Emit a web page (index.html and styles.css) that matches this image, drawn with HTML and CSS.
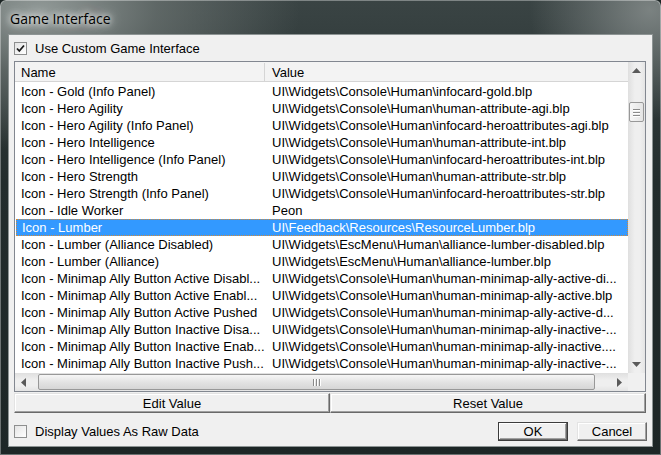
FILE: index.html
```html
<!DOCTYPE html>
<html lang="en">

<head>
    <meta charset="UTF-8">
    <title>Game Interface</title>
    <link rel="stylesheet" href="styles.css">
</head>

<body>
    <div class="window">
        <div class="titlebar">
            <span class="title">Game Interface</span>
        </div>

        <div class="client">
            <div class="check-row top-check">
                <span class="checkbox">
                    <svg width="11" height="11" viewBox="0 0 11 11">
                        <path d="M2 5.5 L4.3 8 L9 2.5" fill="none" stroke="#1a1a1a" stroke-width="1.8" />
                    </svg>
                </span>
                <span>Use Custom Game Interface</span>
            </div>

            <div class="listbox">
                <div class="list-main">
                    <div class="list-view">
                        <div class="list-header">
                            <div class="col col-name">Name</div>
                            <div class="col col-value">Value</div>
                        </div>
                        <div class="list-rows">
                            <div class="row"><div class="col col-name">Icon - Gold (Info Panel)</div><div class="col col-value">UI\Widgets\Console\Human\infocard-gold.blp</div></div>
                            <div class="row"><div class="col col-name">Icon - Hero Agility</div><div class="col col-value">UI\Widgets\Console\Human\human-attribute-agi.blp</div></div>
                            <div class="row"><div class="col col-name">Icon - Hero Agility (Info Panel)</div><div class="col col-value">UI\Widgets\Console\Human\infocard-heroattributes-agi.blp</div></div>
                            <div class="row"><div class="col col-name">Icon - Hero Intelligence</div><div class="col col-value">UI\Widgets\Console\Human\human-attribute-int.blp</div></div>
                            <div class="row"><div class="col col-name">Icon - Hero Intelligence (Info Panel)</div><div class="col col-value">UI\Widgets\Console\Human\infocard-heroattributes-int.blp</div></div>
                            <div class="row"><div class="col col-name">Icon - Hero Strength</div><div class="col col-value">UI\Widgets\Console\Human\human-attribute-str.blp</div></div>
                            <div class="row"><div class="col col-name">Icon - Hero Strength (Info Panel)</div><div class="col col-value">UI\Widgets\Console\Human\infocard-heroattributes-str.blp</div></div>
                            <div class="row"><div class="col col-name">Icon - Idle Worker</div><div class="col col-value">Peon</div></div>
                            <div class="row selected"><div class="col col-name">Icon - Lumber</div><div class="col col-value">UI\Feedback\Resources\ResourceLumber.blp</div></div>
                            <div class="row"><div class="col col-name">Icon - Lumber (Alliance Disabled)</div><div class="col col-value">UI\Widgets\EscMenu\Human\alliance-lumber-disabled.blp</div></div>
                            <div class="row"><div class="col col-name">Icon - Lumber (Alliance)</div><div class="col col-value">UI\Widgets\EscMenu\Human\alliance-lumber.blp</div></div>
                            <div class="row"><div class="col col-name">Icon - Minimap Ally Button Active Disabl...</div><div class="col col-value">UI\Widgets\Console\Human\human-minimap-ally-active-di...</div></div>
                            <div class="row"><div class="col col-name">Icon - Minimap Ally Button Active Enabl...</div><div class="col col-value">UI\Widgets\Console\Human\human-minimap-ally-active.blp</div></div>
                            <div class="row"><div class="col col-name">Icon - Minimap Ally Button Active Pushed</div><div class="col col-value">UI\Widgets\Console\Human\human-minimap-ally-active-d...</div></div>
                            <div class="row"><div class="col col-name">Icon - Minimap Ally Button Inactive Disa...</div><div class="col col-value">UI\Widgets\Console\Human\human-minimap-ally-inactive-...</div></div>
                            <div class="row"><div class="col col-name">Icon - Minimap Ally Button Inactive Enab...</div><div class="col col-value">UI\Widgets\Console\Human\human-minimap-ally-inactive....</div></div>
                            <div class="row"><div class="col col-name">Icon - Minimap Ally Button Inactive Push...</div><div class="col col-value">UI\Widgets\Console\Human\human-minimap-ally-inactive-...</div></div>
                        </div>
                    </div>

                    <div class="vscroll">
                        <div class="arrow">
                            <svg width="9" height="5" viewBox="0 0 9 5"><path d="M4.5 0 L9 5 L0 5 Z" fill="#5a5a5a" /></svg>
                        </div>
                        <div class="vtrack">
                            <div class="vthumb">
                                <span></span><span></span><span></span>
                            </div>
                        </div>
                        <div class="arrow">
                            <svg width="9" height="5" viewBox="0 0 9 5"><path d="M0 0 L9 0 L4.5 5 Z" fill="#5a5a5a" /></svg>
                        </div>
                    </div>
                </div>

                <div class="list-bottom">
                    <div class="hscroll">
                        <div class="arrow">
                            <svg width="5" height="9" viewBox="0 0 5 9"><path d="M5 0 L5 9 L0 4.5 Z" fill="#5a5a5a" /></svg>
                        </div>
                        <div class="htrack">
                            <div class="hthumb">
                                <span></span><span></span><span></span>
                            </div>
                        </div>
                        <div class="arrow">
                            <svg width="5" height="9" viewBox="0 0 5 9"><path d="M0 0 L5 4.5 L0 9 Z" fill="#5a5a5a" /></svg>
                        </div>
                    </div>
                    <div class="corner"></div>
                </div>
            </div>

            <div class="edit-buttons">
                <button class="btn">Edit Value</button>
                <button class="btn">Reset Value</button>
            </div>

            <div class="footer">
                <div class="check-row">
                    <span class="checkbox"></span>
                    <span>Display Values As Raw Data</span>
                </div>
                <div class="dialog-buttons">
                    <button class="btn btn-default">OK</button>
                    <button class="btn">Cancel</button>
                </div>
            </div>
        </div>
    </div>
</body>

</html>
```

FILE: styles.css
```css
* {
    box-sizing: border-box;
}

html,
body {
    margin: 0;
    padding: 0;
}

body {
    width: 661px;
    height: 455px;
    overflow: hidden;
    font-family: "Liberation Sans", Arial, sans-serif;
    font-size: 13px;
    color: #000;
    background: #1c2424;
}

/* glass frame */
.window {
    height: 455px;
    display: flex;
    flex-direction: column;
    border-radius: 6px 6px 0 0;
    background-color: #232d2d;
    background-image:
        radial-gradient(ellipse 260px 140px at 40px 10px, rgba(150, 158, 156, 0.95) 0%, rgba(110, 118, 116, 0.7) 45%, rgba(35, 45, 45, 0) 100%),
        radial-gradient(ellipse 120px 110px at 650px 10px, rgba(130, 137, 136, 0.9) 0%, rgba(35, 45, 45, 0) 100%),
        linear-gradient(to bottom, #3a4444 0%, #232d2d 40%, #1d2626 100%);
    box-shadow: inset 0 0 0 1px rgba(255, 255, 255, 0.35);
}

.titlebar {
    height: 34px;
    display: flex;
    align-items: center;
    padding: 2px 0 0 10px;
}

.title {
    font-family: "Open Sans", "Noto Sans", sans-serif;
    font-size: 14px;
    color: #000;
    text-shadow: 0 0 6px #fff, 0 0 10px rgba(255, 255, 255, 0.9), 0 0 16px rgba(255, 255, 255, 0.6);
}

.client {
    flex: 1;
    margin: 0 8px 8px;
    border: 1px solid #8d9494;
    background: #f0f0f0;
    padding: 0 6px 0 5px;
    display: flex;
    flex-direction: column;
}

/* checkboxes */
.check-row {
    display: flex;
    align-items: center;
    gap: 8px;
}

.top-check {
    height: 26px;
    padding-top: 1px;
}

.checkbox {
    width: 13px;
    height: 13px;
    border: 1px solid #8e8f8f;
    background: linear-gradient(135deg, #e4e4e4, #ffffff);
    display: flex;
    align-items: center;
    justify-content: center;
}

/* list view */
.listbox {
    height: 331px;
    border: 1px solid #828790;
    background: #fff;
    display: flex;
    flex-direction: column;
}

.list-main {
    flex: 1;
    display: flex;
    min-height: 0;
}

.list-view {
    flex: 1;
    overflow: hidden;
}

.list-header {
    display: flex;
    height: 20px;
    background: #f3f3f3;
    border-bottom: 1px solid #d5d5d5;
    line-height: 19px;
    padding-top: 1px;
}

.list-header .col-value {
    border-left: 1px solid #d5d5d5;
}

.list-rows {
    padding-top: 1px;
}

.row {
    display: flex;
    height: 17px;
    line-height: 18px;
}

.col {
    white-space: nowrap;
    overflow: hidden;
}

.col-name {
    width: 249px;
    padding-left: 6px;
}

.col-value {
    flex: 1;
    padding-left: 7px;
}

.row .col-value {
    padding-left: 8px;
}

.row.selected {
    background: #3399ff;
    color: #fff;
    outline: 1px dotted #d08a3c;
    outline-offset: -1px;
    margin-left: 1px;
}

.row.selected .col-name {
    width: 248px;
}

/* scrollbars */
.vscroll {
    width: 17px;
    display: flex;
    flex-direction: column;
    background: linear-gradient(to right, #dfdfdf, #efefef 40%, #efefef 70%, #e4e4e4);
}

.arrow {
    width: 17px;
    height: 17px;
    display: flex;
    align-items: center;
    justify-content: center;
    flex-shrink: 0;
}

.vtrack {
    flex: 1;
}

.vthumb {
    margin: 23px 1px 0;
    height: 20px;
    border: 1px solid #989898;
    border-radius: 2px;
    background: linear-gradient(to right, #f6f6f6, #e4e4e4);
    display: flex;
    flex-direction: column;
    align-items: center;
    justify-content: center;
    gap: 2px;
}

.vthumb span {
    width: 7px;
    height: 1px;
    background: #8a8a8a;
    box-shadow: 0 1px #fff;
}

.list-bottom {
    height: 18px;
    display: flex;
}

.hscroll {
    flex: 1;
    display: flex;
    background: linear-gradient(to bottom, #dfdfdf, #efefef 40%, #efefef 70%, #e4e4e4);
}

.hscroll .arrow {
    height: 18px;
}

.htrack {
    flex: 1;
    display: flex;
    align-items: center;
}

.hthumb {
    margin-left: 6px;
    width: 557px;
    height: 16px;
    border: 1px solid #989898;
    border-radius: 2px;
    background: linear-gradient(to bottom, #f6f6f6, #e2e2e2 55%, #d6d6d6);
    display: flex;
    align-items: center;
    justify-content: center;
    gap: 2px;
}

.hthumb span {
    width: 1px;
    height: 7px;
    background: #8a8a8a;
    box-shadow: 1px 0 #fff;
}

.corner {
    width: 17px;
    background: #f0f0f0;
}

/* buttons */
.btn {
    font-family: inherit;
    font-size: 13px;
    color: #000;
    background: #f0f0f0;
    border: 1px solid;
    border-color: #e3e3e3 #696969 #696969 #e3e3e3;
    box-shadow: inset -1px -1px #a0a0a0, inset 1px 1px #fff;
    padding: 0;
    margin: 0;
}

.edit-buttons {
    display: flex;
    margin-top: 1px;
    height: 20px;
}

.edit-buttons .btn {
    flex: 1;
}

.footer {
    display: flex;
    align-items: center;
    justify-content: space-between;
    margin-top: 9px;
    height: 19px;
}

.dialog-buttons {
    display: flex;
    gap: 9px;
    margin-right: -1px;
}

.dialog-buttons .btn {
    width: 70px;
    height: 19px;
}

.btn-default {
    border-color: #3c3c3c;
    box-shadow: inset -1px -1px #696969, inset 1px 1px #fff, inset -2px -2px #a0a0a0;
}
```
